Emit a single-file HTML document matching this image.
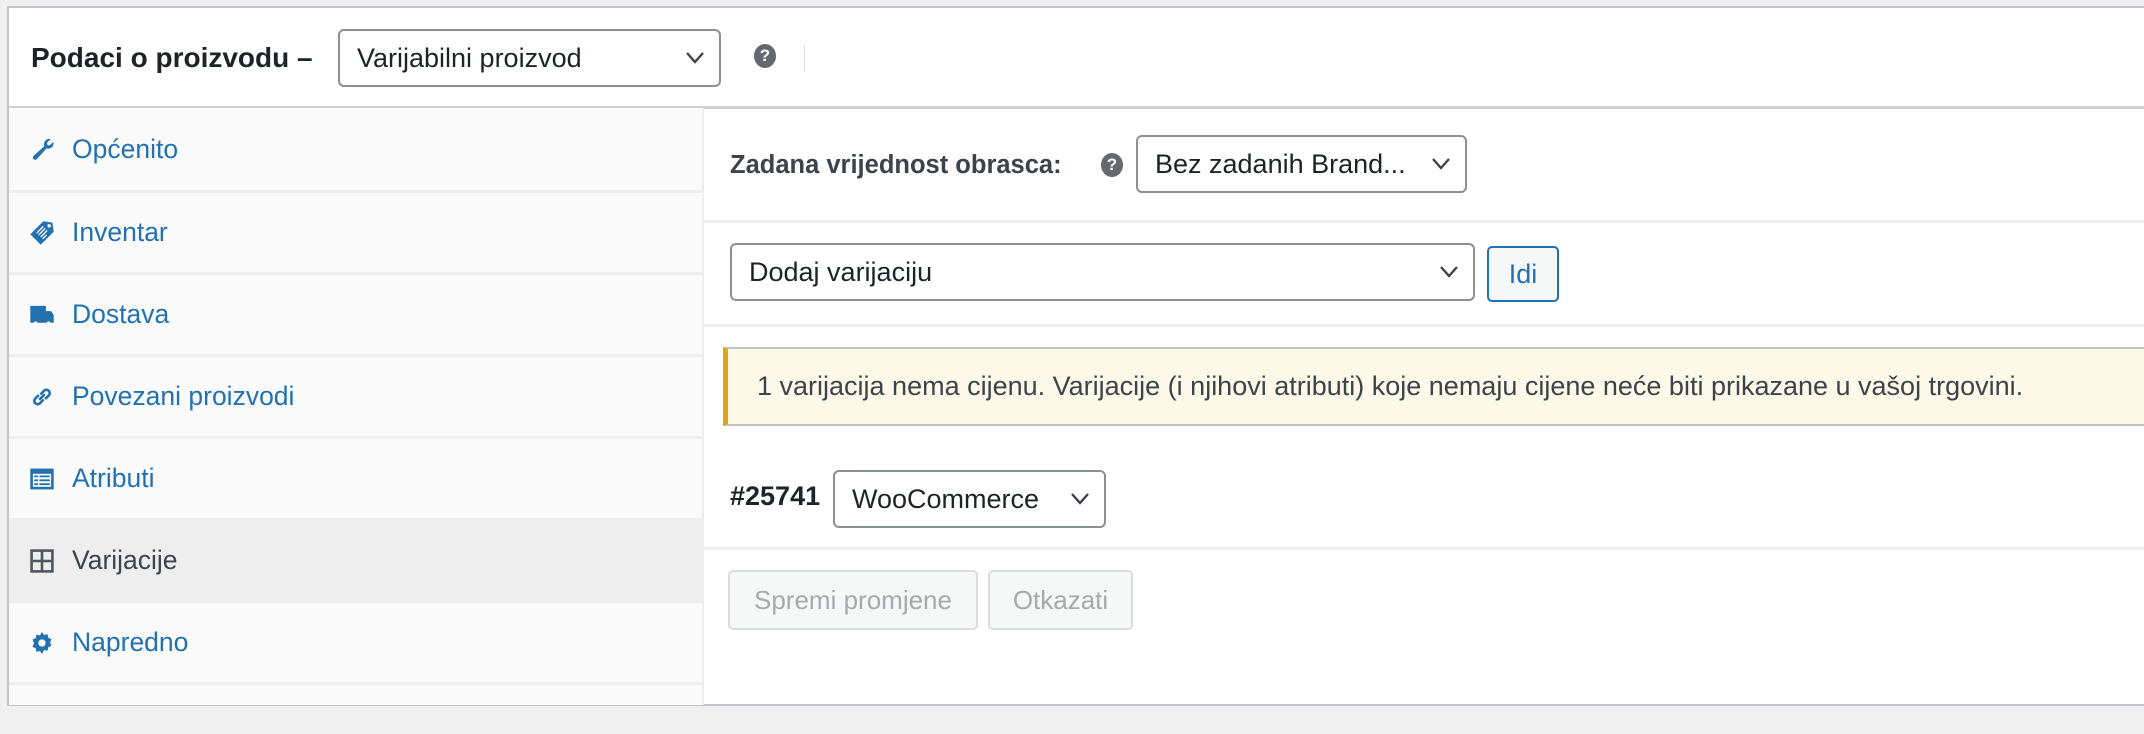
<!DOCTYPE html>
<html><head><meta charset="utf-8"><style>
*{box-sizing:border-box;margin:0;padding:0}
body{width:2144px;height:734px;background:#f0f0f1;font-family:"Liberation Sans",Arial,sans-serif;position:relative;overflow:hidden;color:#1d2327}
.box{position:absolute;left:7px;top:6px;width:2150px;height:700px;background:#fff;border:2px solid #c3c4c7;border-right:none}
.abs{position:absolute}
.sel{position:absolute;border:2px solid #8c8f94;border-radius:6px;background:#fff;font-size:27px;color:#1d2327;display:flex;align-items:center;padding-left:17px;white-space:nowrap}
.sel svg{position:absolute;right:14px;top:50%;margin-top:-7px}
.side{position:absolute;left:0;top:100px;width:695px;height:597px;background:#fafafa;border-right:2px solid #eee}
.item{position:absolute;left:0;width:695px;height:82px;border-bottom:3px solid #eee;display:flex;align-items:center;font-size:26.5px;color:#2271b1}
.item .ic{position:absolute;left:20px;top:50%;transform:translateY(-50%);width:26px;height:26px}
.item span{position:absolute;left:63px}
.hr{position:absolute;left:695px;width:1500px;height:3px;background:#eee}
.help{position:absolute;width:22px;height:24px;border-radius:50%;background:#646970;color:#fff;font-weight:bold;font-size:17px;text-align:center;line-height:24px}
.btn{position:absolute;border:2px solid #dcdcde;border-radius:5px;background:#f6f7f7;color:#a7aaad;font-size:26px;display:flex;align-items:center;justify-content:center}
</style></head><body>
<div class="box">
 <div class="abs" style="left:22px;top:34px;font-size:28px;font-weight:bold;color:#1d2327">Podaci o proizvodu –</div>
 <div class="sel" style="left:329px;top:21px;width:383px;height:58px">Varijabilni proizvod<svg width="20" height="13" viewBox="0 0 20 13"><path d="M2 2l8 9 8-9" fill="none" stroke="#3c434a" stroke-width="2.4"/></svg></div>
 <div class="help" style="left:745px;top:36px">?</div>
 <div class="abs" style="left:795px;top:37px;width:1px;height:27px;background:#dcdcde"></div>
 <div class="abs" style="left:0;top:98px;width:2150px;height:3px;background:#c3c4c7;opacity:.8"></div>

 <div class="side">
  <div class="item" style="top:0;height:85px"><svg class="ic" viewBox="0 0 20 20"><path d="M16.7 2.4l-2.9 2.9.4 1.6 1.6.4 2.9-2.9c.5 2.1-.3 4.2-2.3 5-1 .4-2 .4-2.9.1L6 17.8c-.7.7-1.8.7-2.5 0s-.7-1.8 0-2.5l8.3-7.5c-.4-1-.4-2.2.1-3.2.9-1.9 2.900-2.7 4.8-2.2z" fill="#2271b1"/></svg><span>Općenito</span></div>
  <div class="item" style="top:85px"><svg class="ic" viewBox="0 0 20 20"><path d="M11 1l7 1 1 7-10 10-8-8z" fill="#2271b1"/><path d="M6 10l5-5M7.5 11.5l5-5M9 13l5-5M10.5 14.5l3-3" stroke="#fff" stroke-width="1"/><circle cx="15.5" cy="4.5" r="1.3" fill="#fff"/></svg><span>Inventar</span></div>
  <div class="item" style="top:167px"><svg class="ic" viewBox="0 0 20 20"><path d="M1 3h12v4h4l2 3v6H1z" fill="#2271b1"/><circle cx="5" cy="16.5" r="1.6" fill="#fff"/><circle cx="15" cy="16.5" r="1.6" fill="#fff"/></svg><span>Dostava</span></div>
  <div class="item" style="top:249px"><svg class="ic" viewBox="0 0 20 20"><path d="M8.5 11.5l3-3M7 9l-2.5 2.5a2.6 2.6 0 003.6 3.6L10.6 12.6M13 11l2.5-2.5a2.6 2.6 0 00-3.6-3.6L9.4 7.4" fill="none" stroke="#2271b1" stroke-width="2" stroke-linecap="round"/></svg><span>Povezani proizvodi</span></div>
  <div class="item" style="top:331px"><svg class="ic" viewBox="0 0 20 20"><rect x="1" y="2" width="18" height="16" fill="#2271b1"/><rect x="3" y="6" width="14" height="10" fill="#fff"/><path d="M4 8h3M8 8h8M4 11h3M8 11h8M4 14h3M8 14h8" stroke="#2271b1" stroke-width="1.4"/></svg><span>Atributi</span></div>
  <div class="item" style="top:413px;background:#eee;color:#3c434a"><svg class="ic" viewBox="0 0 20 20"><rect x="2" y="2" width="16" height="16" fill="none" stroke="#50575e" stroke-width="2"/><path d="M10 2v16M2 10h16" stroke="#50575e" stroke-width="2"/></svg><span>Varijacije</span></div>
  <div class="item" style="top:495px"><svg class="ic" viewBox="0 0 20 20"><path d="M10 1.5l1.6 2.3 2.7-.6.5 2.7 2.5 1.2-1.1 2.5 1.1 2.5-2.5 1.2-.5 2.7-2.7-.6L10 18.5l-1.6-2.3-2.7.6-.5-2.7-2.5-1.2L3.8 10 2.7 7.4l2.5-1.2.5-2.7 2.7.6z" fill="#2271b1"/><circle cx="10" cy="10" r="2.8" fill="#fafafa"/></svg><span>Napredno</span></div>
 </div>

 <div class="abs" style="left:721px;top:143px;font-size:25.5px;font-weight:bold;color:#3c434a">Zadana vrijednost obrasca:</div>
 <div class="help" style="left:1092px;top:145px">?</div>
 <div class="sel" style="left:1127px;top:127px;width:331px;height:58px">Bez zadanih Brand...<svg width="20" height="13" viewBox="0 0 20 13"><path d="M2 2l8 9 8-9" fill="none" stroke="#3c434a" stroke-width="2.4"/></svg></div>
 <div class="hr" style="top:212px"></div>
 <div class="sel" style="left:721px;top:235px;width:745px;height:58px">Dodaj varijaciju<svg width="20" height="13" viewBox="0 0 20 13"><path d="M2 2l8 9 8-9" fill="none" stroke="#3c434a" stroke-width="2.4"/></svg></div>
 <div class="btn" style="left:1478px;top:238px;width:72px;height:56px;border-color:#2271b1;color:#2271b1;font-size:27px">Idi</div>
 <div class="hr" style="top:316px"></div>
 <div class="abs" style="left:714px;top:339px;width:1450px;height:79px;background:#fcf9e8;border:2px solid #c3c4c7;border-left:5px solid #dba617;border-right:none"></div>
 <div class="abs" style="left:748px;top:363px;font-size:27px;color:#3c434a;white-space:nowrap">1 varijacija nema cijenu. Varijacije (i njihovi atributi) koje nemaju cijene neće biti prikazane u vašoj trgovini.</div>
 <div class="abs" style="left:721px;top:473px;font-size:27px;font-weight:bold;color:#1d2327">#25741</div>
 <div class="sel" style="left:824px;top:462px;width:273px;height:58px">WooCommerce<svg width="20" height="13" viewBox="0 0 20 13"><path d="M2 2l8 9 8-9" fill="none" stroke="#3c434a" stroke-width="2.4"/></svg></div>
 <div class="hr" style="top:539px"></div>
 <div class="btn" style="left:719px;top:562px;width:250px;height:60px">Spremi promjene</div>
 <div class="btn" style="left:979px;top:562px;width:145px;height:60px">Otkazati</div>
</div>
</body></html>
